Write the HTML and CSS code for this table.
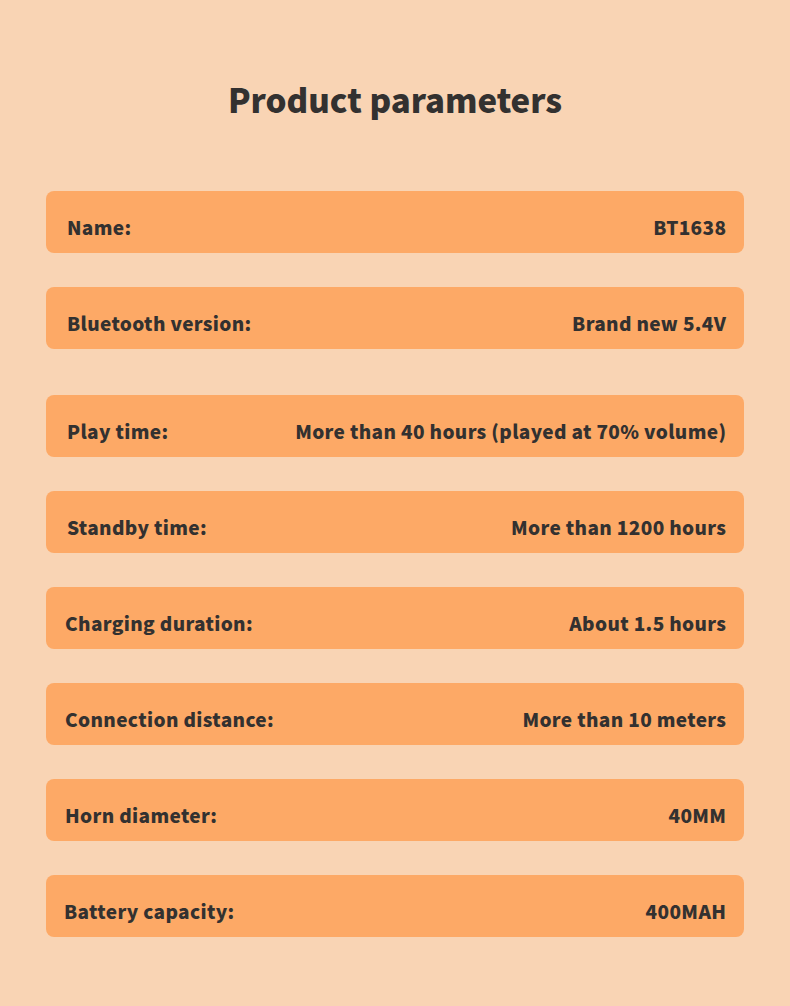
FILE: index.html
```html
<!DOCTYPE html>
<html lang="en">
<head>
<meta charset="utf-8">
<link rel="stylesheet" href="styles.css">
</head>
<body>
<main class="page">
  <h1 class="title">Product parameters</h1>
  <div class="rows">
    <div class="row"><span class="k">Name:</span><span class="v">BT1638</span></div>
    <div class="row"><span class="k">Bluetooth version:</span><span class="v">Brand new 5.4V</span></div>
    <div class="row gap-big"><span class="k">Play time:</span><span class="v">More than 40 hours (played at 70% volume)</span></div>
    <div class="row"><span class="k">Standby time:</span><span class="v">More than 1200 hours</span></div>
    <div class="row shift"><span class="k">Charging duration:</span><span class="v">About 1.5 hours</span></div>
    <div class="row shift"><span class="k">Connection distance:</span><span class="v">More than 10 meters</span></div>
    <div class="row shift"><span class="k">Horn diameter:</span><span class="v">40MM</span></div>
    <div class="row shift2"><span class="k">Battery capacity:</span><span class="v">400MAH</span></div>
  </div>
</main>
</body>
</html>
```

FILE: styles.css
```css
html, body {
  margin: 0;
  padding: 0;
  background: #F9D4B4;
}
.page {
  width: 790px;
  height: 1006px;
  box-sizing: border-box;
  padding-top: 77px;
  font-family: "Noto Sans CJK SC", "Noto Sans", sans-serif;
  color: #333130;
}
.title {
  margin: 0;
  text-align: center;
  font-size: 33px;
  font-weight: 900;
  line-height: 44px;
}
.rows {
  margin: 70px 46px 0 46px;
  display: flex;
  flex-direction: column;
  gap: 34px;
}
.row {
  height: 62px;
  box-sizing: border-box;
  background: #FDA966;
  border-radius: 8px;
  display: flex;
  justify-content: space-between;
  align-items: center;
  padding: 8px 18px 0 21px;
  font-size: 19px;
  font-weight: 900;
  letter-spacing: 0.35px;
}
.row .v { margin-right: -0.35px; }
.row.gap-big { margin-top: 12px; }
.row.shift { padding-left: 19px; }
.row.shift2 { padding-left: 18px; }
```
